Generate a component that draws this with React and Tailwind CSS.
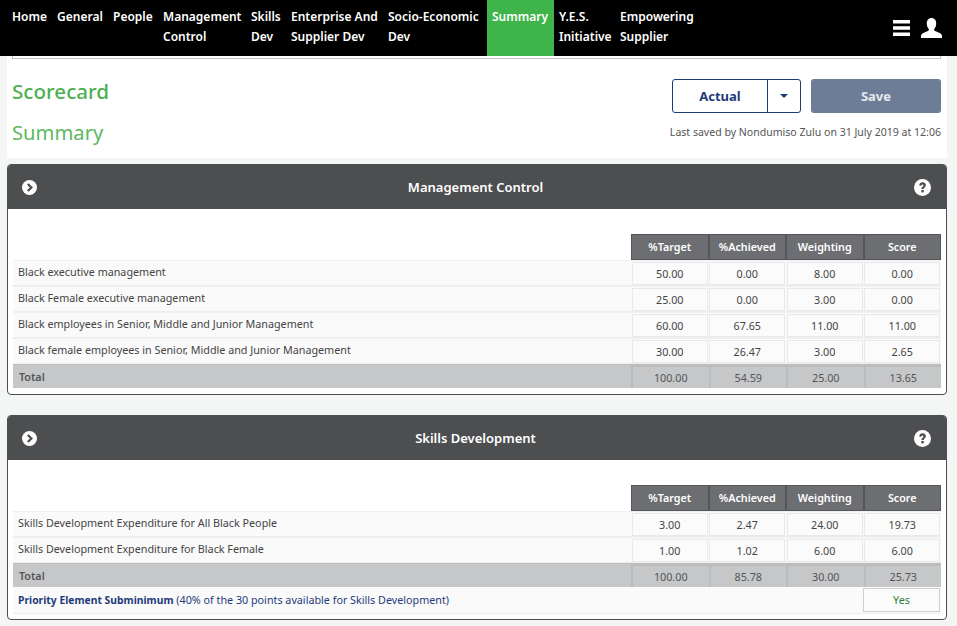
const navItems = [
  { label: ["Home"], w: "w-[45px]" },
  { label: ["General"], w: "w-[56px]" },
  { label: ["People"], w: "w-[50px]" },
  { label: ["Management", "Control"], w: "w-[88px]" },
  { label: ["Skills", "Dev"], w: "w-[40px]" },
  { label: ["Enterprise And", "Supplier Dev"], w: "w-[97px]" },
  { label: ["Socio-Economic", "Dev"], w: "w-[104px]" },
  { label: ["Summary"], w: "w-[67px]", active: true },
  { label: ["Y.E.S.", "Initiative"], w: "w-[61px]" },
  { label: ["Empowering", "Supplier"], w: "w-[90px]" },
];

const management = [
  ["Black executive management", "50.00", "0.00", "8.00", "0.00"],
  ["Black Female executive management", "25.00", "0.00", "3.00", "0.00"],
  ["Black employees in Senior, Middle and Junior Management", "60.00", "67.65", "11.00", "11.00"],
  ["Black female employees in Senior, Middle and Junior Management", "30.00", "26.47", "3.00", "2.65"],
];

const skills = [
  ["Skills Development Expenditure for All Black People", "3.00", "2.47", "24.00", "19.73"],
  ["Skills Development Expenditure for Black Female", "1.00", "1.02", "6.00", "6.00"],
];

function ChevronCircle() {
  return (
    <svg width="15" height="15" viewBox="0 0 16 16">
      <circle cx="8" cy="8" r="8" fill="#fff" />
      <path d="M6.2 4.2 L10 8 L6.2 11.8" fill="none" stroke="#4d4e50" strokeWidth="2.4" />
    </svg>
  );
}

function HelpCircle() {
  return (
    <svg width="17" height="17" viewBox="0 0 16 16">
      <circle cx="8" cy="8" r="8" fill="#fff" />
      <path d="M4.9 6 C5 4.200 6.400 3.100 8.100 3.100 C9.900 3.100 11.200 4.300 11.200 5.800 C11.200 7.600 9.200 7.900 9.200 9.500 L6.900 9.500 C6.900 7.300 8.900 7 8.900 6 C8.900 5.500 8.500 5.200 8 5.200 C7.500 5.200 7.100 5.600 7 6.400 Z" fill="#4d4e50" />
      <rect x="6.9" y="10.300" width="2.300" height="2.300" fill="#4d4e50" />
    </svg>
  );
}

function BarsIcon() {
  return (
    <svg width="17" height="16" viewBox="0 0 17 16" fill="#fff">
      <rect y="0" width="17" height="3.5" />
      <rect y="6.25" width="17" height="3.5" />
      <rect y="12.5" width="17" height="3.5" />
    </svg>
  );
}

function UserIcon() {
  return (
    <svg width="21" height="20" viewBox="0 0 21 20" fill="#fff">
      <path d="M10.5 0 C13.6 0 15.2 2.3 15.2 5.4 C15.2 8 14.2 10 13 11.2 C13 12.6 14.5 13.3 17 14.2 C19.3 15 21 16 21 18 L21 20 L0 20 L0 18 C0 16 1.7 15 4 14.2 C6.5 13.3 8 12.6 8 11.2 C6.8 10 5.8 8 5.8 5.4 C5.8 2.3 7.4 0 10.5 0 Z" />
    </svg>
  );
}

function HeaderRow() {
  return (
    <div className="flex h-[26px]">
      <div className="flex-1" />
      {["%Target", "%Achieved", "Weighting", "Score"].map((h) => (
        <div
          key={h}
          className="flex w-[77.5px] items-center justify-center border border-[#55565a] bg-[#6d6e71] text-[10.75px] font-semibold text-white"
        >
          {h}
        </div>
      ))}
    </div>
  );
}

function Row({ row }) {
  return (
    <div className="flex h-[26px] border-t border-b border-t-[#f0f0f0] border-b-[#eeeeee] bg-[#fafafa]">
      <div className="flex-1 pt-[3px] pl-[5px] text-[10.75px] text-[#444]">{row[0]}</div>
      {row.slice(1).map((v, i) => (
        <div key={i} className="flex w-[77.5px] items-center justify-center pt-[1px]">
          <div className="flex h-[23px] w-[76px] items-center justify-center border border-[#e9e9e9] bg-[#fbfbfb] pt-[2px] text-[10.75px] text-[#444]">
            {v}
          </div>
        </div>
      ))}
    </div>
  );
}

function TotalRow({ values }) {
  return (
    <div className="flex h-[24px] border-t border-[#bdbebf] bg-[#c6c7c9]">
      <div className="flex-1 pt-[4px] pl-[6px] text-[10.75px] font-semibold text-[#555]">Total</div>
      {values.map((v) => (
        <div
          key={v}
          className="flex w-[77.5px] items-center justify-center border-t-2 border-l-2 border-[#bbbcbe] pt-[2px] text-[10.75px] text-[#555]"
        >
          {v}
        </div>
      ))}
    </div>
  );
}

function Panel({ title, children, className, pad }) {
  return (
    <section className={`ml-[7px] w-[940px] rounded-[4px] border border-[#4d4e50] bg-white ${className}`}>
      <div className="flex h-[44px] items-center justify-between rounded-t-[3px] bg-[#4d4e50] pr-[15px] pl-[14px]">
        <ChevronCircle />
        <h2 className="pt-[1px] text-[13px] font-semibold text-white">{title}</h2>
        <HelpCircle />
      </div>
      <div className={`px-[5px] pt-[25px] ${pad}`}>{children}</div>
    </section>
  );
}

export default function App() {
  return (
    <div className="h-[626px] overflow-hidden bg-[#f4f5f5] font-['Noto_Sans',sans-serif]">
      <nav className="flex h-[56px] items-stretch bg-black pl-[7px] text-[12px] leading-[20px] font-semibold text-white">
        {navItems.map((item) => (
          <div
            key={item.label[0]}
            className={`${item.w} px-[5px] pt-[7px] ${item.active ? "bg-[#3fb44a]" : ""}`}
          >
            {item.label.map((t) => (
              <div key={t} className="whitespace-nowrap">{t}</div>
            ))}
          </div>
        ))}
        <div className="ml-auto flex items-center gap-[11px] pr-[15px] pb-[1px]">
          <BarsIcon />
          <UserIcon />
        </div>
      </nav>

      <div className="ml-[7px] h-[102px] w-[940px] bg-white pr-[6px] pl-[5px]">
        <div className="h-[3px] border-x border-b border-[#c4c4c4]" />
        <div className="flex justify-between">
          <div>
            <h1 className="mt-[17px] text-[20.6px] leading-[30px] font-medium text-[#4caf50]">Scorecard</h1>
            <h2 className="mt-[11px] text-[20.2px] leading-[30px] text-[#5cb860]">Summary</h2>
          </div>
          <div className="flex flex-col items-end pt-[20px]">
            <div className="flex gap-[10px]">
              <div className="flex h-[34px] w-[129px] rounded-[3px] border border-[#1f3a7a] text-[13px] font-bold text-[#1f3a7a]">
                <div className="flex flex-1 items-center justify-center pt-[1px]">Actual</div>
                <div className="flex w-[33px] items-center justify-center border-l border-[#1f3a7a]">
                  <div className="h-0 w-0 border-x-[4px] border-t-[4px] border-x-transparent border-t-[#1f3a7a]" />
                </div>
              </div>
              <div className="flex h-[34px] w-[130px] items-center justify-center rounded-[3px] bg-[#6d7d97] pt-[1px] text-[13px] font-bold text-[#e6e9ee]">
                Save
              </div>
            </div>
            <p className="mt-[12px] text-[10.55px] text-[#555]">Last saved by Nondumiso Zulu on 31 July 2019 at 12:06</p>
          </div>
        </div>
      </div>

      <Panel title="Management Control" className="mt-[6px]" pad="pb-[6px]">
        <HeaderRow />
        {management.map((r) => (
          <Row key={r[0]} row={r} />
        ))}
        <TotalRow values={["100.00", "54.59", "25.00", "13.65"]} />
      </Panel>

      <Panel title="Skills Development" className="mt-[20px]" pad="pb-[5px]">
        <HeaderRow />
        {skills.map((r) => (
          <Row key={r[0]} row={r} />
        ))}
        <TotalRow values={["100.00", "85.78", "30.00", "25.73"]} />
        <div className="flex h-[27px] items-center justify-between border-b border-[#eeeeee] bg-[#fafafa] pl-[5px] text-[10.75px]">
          <p className="text-[#1f3a7a]">
            <span className="text-[10.35px] font-bold">Priority Element Subminimum</span> (40% of the 30 points available for Skills Development)
          </p>
          <div className="mr-[1px] flex h-[24px] w-[77px] items-center justify-center border border-[#cfcfcf] bg-[#fbfbfb] pt-[1px] text-[#2e7d32]">
            Yes
          </div>
        </div>
      </Panel>
    </div>
  );
}
